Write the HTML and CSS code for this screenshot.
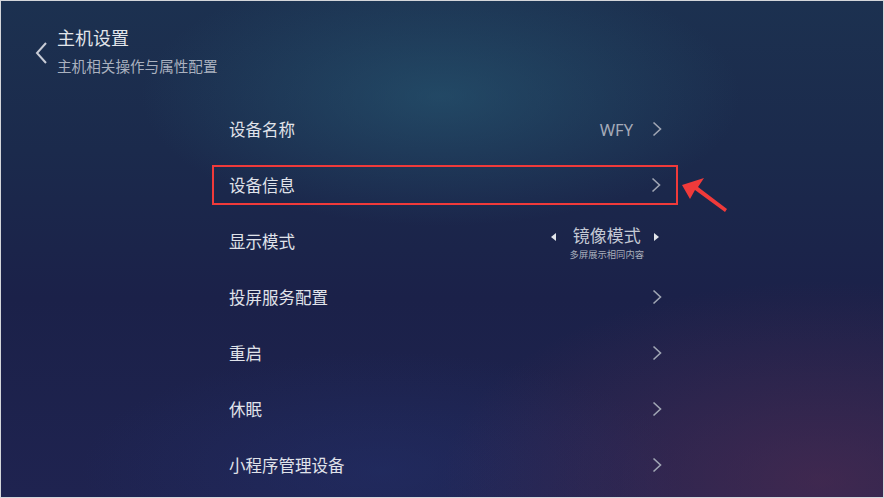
FILE: index.html
```html
<!DOCTYPE html>
<html lang="zh">
<head>
<meta charset="utf-8">
<link rel="stylesheet" href="styles.css">
</head>
<body>
<div class="screen">
  <header class="header">
    <svg class="back" width="14" height="24" viewBox="0 0 14 24"><path d="M12 2 L3 12 L12 22" fill="none" stroke="#c8ccd6" stroke-width="2"/></svg>
    <div class="titles">
      <div class="title">主机设置</div>
      <div class="subtitle">主机相关操作与属性配置</div>
    </div>
  </header>
  <ul class="list">
    <li class="row"><span class="label">设备名称</span><span class="value">WFY</span><svg class="chev" width="10" height="16" viewBox="0 0 10 16"><path d="M1.5 1.5 L8.5 8 L1.5 14.5" fill="none" stroke="#a0a6b4" stroke-width="1.6"/></svg></li>
    <li class="row active"><span class="label">设备信息</span><svg class="chev" width="10" height="16" viewBox="0 0 10 16"><path d="M1.5 1.5 L8.5 8 L1.5 14.5" fill="none" stroke="#a0a6b4" stroke-width="1.6"/></svg>
      <svg class="pointer" width="50" height="44" viewBox="0 0 50 44"><path d="M1 14 L23 7 L17 16 L46 38 L44 41 L14 19 L9 28 Z" fill="#f03a3a"/></svg>
    </li>
    <li class="row"><span class="label">显示模式</span>
      <div class="mode">
        <span class="tri left"></span>
        <div class="mode-text"><div class="mode-name">镜像模式</div><div class="mode-desc">多屏展示相同内容</div></div>
        <span class="tri right"></span>
      </div>
    </li>
    <li class="row"><span class="label">投屏服务配置</span><svg class="chev" width="10" height="16" viewBox="0 0 10 16"><path d="M1.5 1.5 L8.5 8 L1.5 14.5" fill="none" stroke="#a0a6b4" stroke-width="1.6"/></svg></li>
    <li class="row"><span class="label">重启</span><svg class="chev" width="10" height="16" viewBox="0 0 10 16"><path d="M1.5 1.5 L8.5 8 L1.5 14.5" fill="none" stroke="#a0a6b4" stroke-width="1.6"/></svg></li>
    <li class="row"><span class="label">休眠</span><svg class="chev" width="10" height="16" viewBox="0 0 10 16"><path d="M1.5 1.5 L8.5 8 L1.5 14.5" fill="none" stroke="#a0a6b4" stroke-width="1.6"/></svg></li>
    <li class="row"><span class="label">小程序管理设备</span><svg class="chev" width="10" height="16" viewBox="0 0 10 16"><path d="M1.5 1.5 L8.5 8 L1.5 14.5" fill="none" stroke="#a0a6b4" stroke-width="1.6"/></svg></li>
  </ul>
</div>
</body>
</html>
```
FILE: styles.css
```css
html, body { margin: 0; padding: 0; }
body {
  width: 884px; height: 498px; overflow: hidden;
  font-family: "Noto Sans CJK SC", "Noto Sans", sans-serif;
}
.screen {
  box-sizing: border-box;
  width: 884px; height: 498px;
  border: 1px solid #d4d6da;
  background:
    radial-gradient(ellipse 300px 130px at 440px 95px, rgba(40, 95, 120, 0.55), rgba(40, 95, 120, 0) 100%),
    radial-gradient(ellipse 380px 200px at 820px 480px, rgba(90, 45, 80, 0.55), rgba(90, 45, 80, 0) 100%),
    radial-gradient(ellipse 300px 120px at 380px 470px, rgba(35, 50, 110, 0.45), rgba(35, 50, 110, 0) 100%),
    linear-gradient(180deg, #1c3150 0%, #1b2a4c 30%, #1b2149 60%, #1f2350 100%);
  position: relative;
}
.header {
  display: flex; align-items: flex-start;
  padding: 23px 0 0 33px;
  gap: 9px;
}
.back { margin-top: 17px; }
.title { font-size: 18px; color: #e2e5ea; line-height: 26px; }
.subtitle { font-size: 14.6px; color: #aab1bf; line-height: 20px; margin-top: 6px; }
.list {
  list-style: none; margin: 0; padding: 0;
  margin-top: 25px;
  margin-left: 211px; width: 466px;
}
.row {
  position: relative;
  box-sizing: border-box;
  height: 56px;
  display: flex; align-items: center;
  padding: 0 16px 0 17px;
  font-size: 16.5px; color: #e0e3ea;
}
.label { flex: 1; }
.value { font-family: "Noto Sans", sans-serif; color: #a4aab8; font-size: 16.5px; margin-right: 19px; }
.chev { display: block; }
.row.active { height: 40px; margin: 8px 0; border: 2px solid #f03a3a; padding: 0 15px 0 15px; }
.pointer { position: absolute; left: 467px; top: 4px; }
.mode { display: flex; align-items: center; margin-right: 3px; }
.mode-text { text-align: center; margin: 0 10px 0 14px; margin-top: 2px; }
.mode-name { font-size: 17px; color: #c4c9d4; line-height: 22px; }
.mode-desc { font-size: 9.3px; color: #a8aebb; line-height: 12px; margin-top: 2px; }
.tri { width: 0; height: 0; border-top: 4px solid transparent; border-bottom: 4px solid transparent; margin-top: -8px; }
.tri.left { border-right: 5px solid #e2e5ea; }
.tri.right { border-left: 5px solid #e2e5ea; }
```
